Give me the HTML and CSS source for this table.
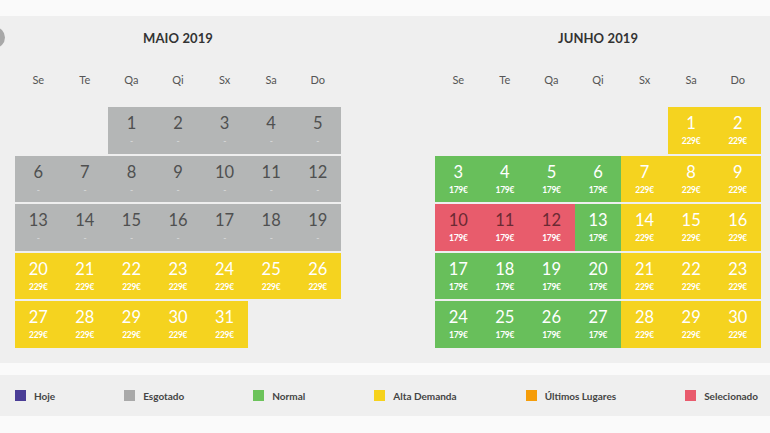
FILE: index.html
```html
<!DOCTYPE html>
<html lang="pt">
<head>
<meta charset="utf-8">
<link rel="stylesheet" href="styles.css">
</head>
<body>
<div class="panel">
  <span class="nav-btn"></span>
  <div class="month">
    <div class="title">MAIO 2019</div>
    <div class="weekdays"><span>Se</span><span>Te</span><span>Qa</span><span>Qi</span><span>Sx</span><span>Sa</span><span>Do</span></div>
    <div class="grid">
      <div class="cell empty"></div><div class="cell empty"></div>
      <div class="cell sold"><b>1</b><i>-</i></div><div class="cell sold"><b>2</b><i>-</i></div><div class="cell sold"><b>3</b><i>-</i></div><div class="cell sold"><b>4</b><i>-</i></div><div class="cell sold"><b>5</b><i>-</i></div>
      <div class="cell sold"><b>6</b><i>-</i></div><div class="cell sold"><b>7</b><i>-</i></div><div class="cell sold"><b>8</b><i>-</i></div><div class="cell sold"><b>9</b><i>-</i></div><div class="cell sold"><b>10</b><i>-</i></div><div class="cell sold"><b>11</b><i>-</i></div><div class="cell sold"><b>12</b><i>-</i></div>
      <div class="cell sold"><b>13</b><i>-</i></div><div class="cell sold"><b>14</b><i>-</i></div><div class="cell sold"><b>15</b><i>-</i></div><div class="cell sold"><b>16</b><i>-</i></div><div class="cell sold"><b>17</b><i>-</i></div><div class="cell sold"><b>18</b><i>-</i></div><div class="cell sold"><b>19</b><i>-</i></div>
      <div class="cell high"><b>20</b><i>229€</i></div><div class="cell high"><b>21</b><i>229€</i></div><div class="cell high"><b>22</b><i>229€</i></div><div class="cell high"><b>23</b><i>229€</i></div><div class="cell high"><b>24</b><i>229€</i></div><div class="cell high"><b>25</b><i>229€</i></div><div class="cell high"><b>26</b><i>229€</i></div>
      <div class="cell high"><b>27</b><i>229€</i></div><div class="cell high"><b>28</b><i>229€</i></div><div class="cell high"><b>29</b><i>229€</i></div><div class="cell high"><b>30</b><i>229€</i></div><div class="cell high"><b>31</b><i>229€</i></div><div class="cell empty"></div><div class="cell empty"></div>
    </div>
  </div>
  <div class="month">
    <div class="title">JUNHO 2019</div>
    <div class="weekdays"><span>Se</span><span>Te</span><span>Qa</span><span>Qi</span><span>Sx</span><span>Sa</span><span>Do</span></div>
    <div class="grid">
      <div class="cell empty"></div><div class="cell empty"></div><div class="cell empty"></div><div class="cell empty"></div><div class="cell empty"></div>
      <div class="cell high"><b>1</b><i>229€</i></div><div class="cell high"><b>2</b><i>229€</i></div>
      <div class="cell normal"><b>3</b><i>179€</i></div><div class="cell normal"><b>4</b><i>179€</i></div><div class="cell normal"><b>5</b><i>179€</i></div><div class="cell normal"><b>6</b><i>179€</i></div><div class="cell high"><b>7</b><i>229€</i></div><div class="cell high"><b>8</b><i>229€</i></div><div class="cell high"><b>9</b><i>229€</i></div>
      <div class="cell selected"><b>10</b><i>179€</i></div><div class="cell selected"><b>11</b><i>179€</i></div><div class="cell selected"><b>12</b><i>179€</i></div><div class="cell normal"><b>13</b><i>179€</i></div><div class="cell high"><b>14</b><i>229€</i></div><div class="cell high"><b>15</b><i>229€</i></div><div class="cell high"><b>16</b><i>229€</i></div>
      <div class="cell normal"><b>17</b><i>179€</i></div><div class="cell normal"><b>18</b><i>179€</i></div><div class="cell normal"><b>19</b><i>179€</i></div><div class="cell normal"><b>20</b><i>179€</i></div><div class="cell high"><b>21</b><i>229€</i></div><div class="cell high"><b>22</b><i>229€</i></div><div class="cell high"><b>23</b><i>229€</i></div>
      <div class="cell normal"><b>24</b><i>179€</i></div><div class="cell normal"><b>25</b><i>179€</i></div><div class="cell normal"><b>26</b><i>179€</i></div><div class="cell normal"><b>27</b><i>179€</i></div><div class="cell high"><b>28</b><i>229€</i></div><div class="cell high"><b>29</b><i>229€</i></div><div class="cell high"><b>30</b><i>229€</i></div>
    </div>
  </div>
</div>
<div class="legend">
  <div class="item"><span class="sw sw-today"></span>Hoje</div>
  <div class="item"><span class="sw sw-sold"></span>Esgotado</div>
  <div class="item"><span class="sw sw-normal"></span>Normal</div>
  <div class="item"><span class="sw sw-high"></span>Alta Demanda</div>
  <div class="item"><span class="sw sw-last"></span>Últimos Lugares</div>
  <div class="item"><span class="sw sw-sel"></span>Selecionado</div>
</div>
</body>
</html>
```

FILE: styles.css
```css
html, body {
  margin: 0;
  padding: 0;
}
body {
  background: #fafafa;
  font-family: Lato, "Open Sans", sans-serif;
  color: #444;
  width: 770px;
  height: 433px;
  overflow: hidden;
}
.panel {
  position: relative;
  margin-top: 16px;
  height: 347px;
  background: #efefef;
  display: flex;
  padding-left: 15px;
  gap: 94px;
  box-sizing: border-box;
}
.nav-btn {
  position: absolute;
  left: -16px;
  top: 11px;
  width: 21px;
  height: 21px;
  border-radius: 50%;
  background: #a8a8a8;
}
.month {
  width: 326px;
  display: flex;
  flex-direction: column;
}
.title {
  margin-top: 14px;
  height: 16px;
  line-height: 16px;
  text-align: center;
  font-weight: 700;
  font-size: 13px;
  color: #333;
  letter-spacing: 0.1px;
}
.weekdays {
  margin-top: 26px;
  display: grid;
  grid-template-columns: repeat(7, 1fr);
  height: 16px;
  line-height: 16px;
  font-size: 11px;
  color: #555;
  text-align: center;
}
.grid {
  margin-top: 19px;
  display: grid;
  grid-template-columns: repeat(7, 1fr);
  grid-auto-rows: 46.5px;
  row-gap: 2px;
}
.cell {
  display: flex;
  flex-direction: column;
  align-items: center;
  padding-top: 6px;
  box-sizing: border-box;
}
.cell b {
  font-weight: 400;
  font-size: 16.5px;
  line-height: 20px;
}
.cell i {
  font-style: normal;
  font-weight: 700;
  font-size: 8.5px;
  line-height: 10px;
  margin-top: 3px;
  letter-spacing: -0.3px;
}
.empty { background: transparent; }
.sold { background: #b4b6b6; color: #4f5050; }
.sold i { color: #d3d4d4; }
.high { background: #f5d31f; color: #fff; }
.normal { background: #68bf5b; color: #fff; }
.selected { background: #e85c6c; color: #6a2a33; }
.selected i { color: #fff; }

.legend {
  margin-top: 12px;
  height: 41px;
  background: #efefef;
  display: flex;
  align-items: center;
  padding-left: 15px;
  gap: 69px;
}
.item {
  display: flex;
  align-items: center;
  font-size: 10px;
  font-weight: 700;
  color: #444;
}
.sw {
  width: 11px;
  height: 11px;
  margin-right: 8px;
}
.sw-today { background: #4a3d96; }
.sw-sold { background: #a9a9a9; }
.sw-normal { background: #6cc35b; }
.sw-high { background: #f6d21c; }
.sw-last { background: #f59d0a; }
.sw-sel { background: #e95b6d; }
```
